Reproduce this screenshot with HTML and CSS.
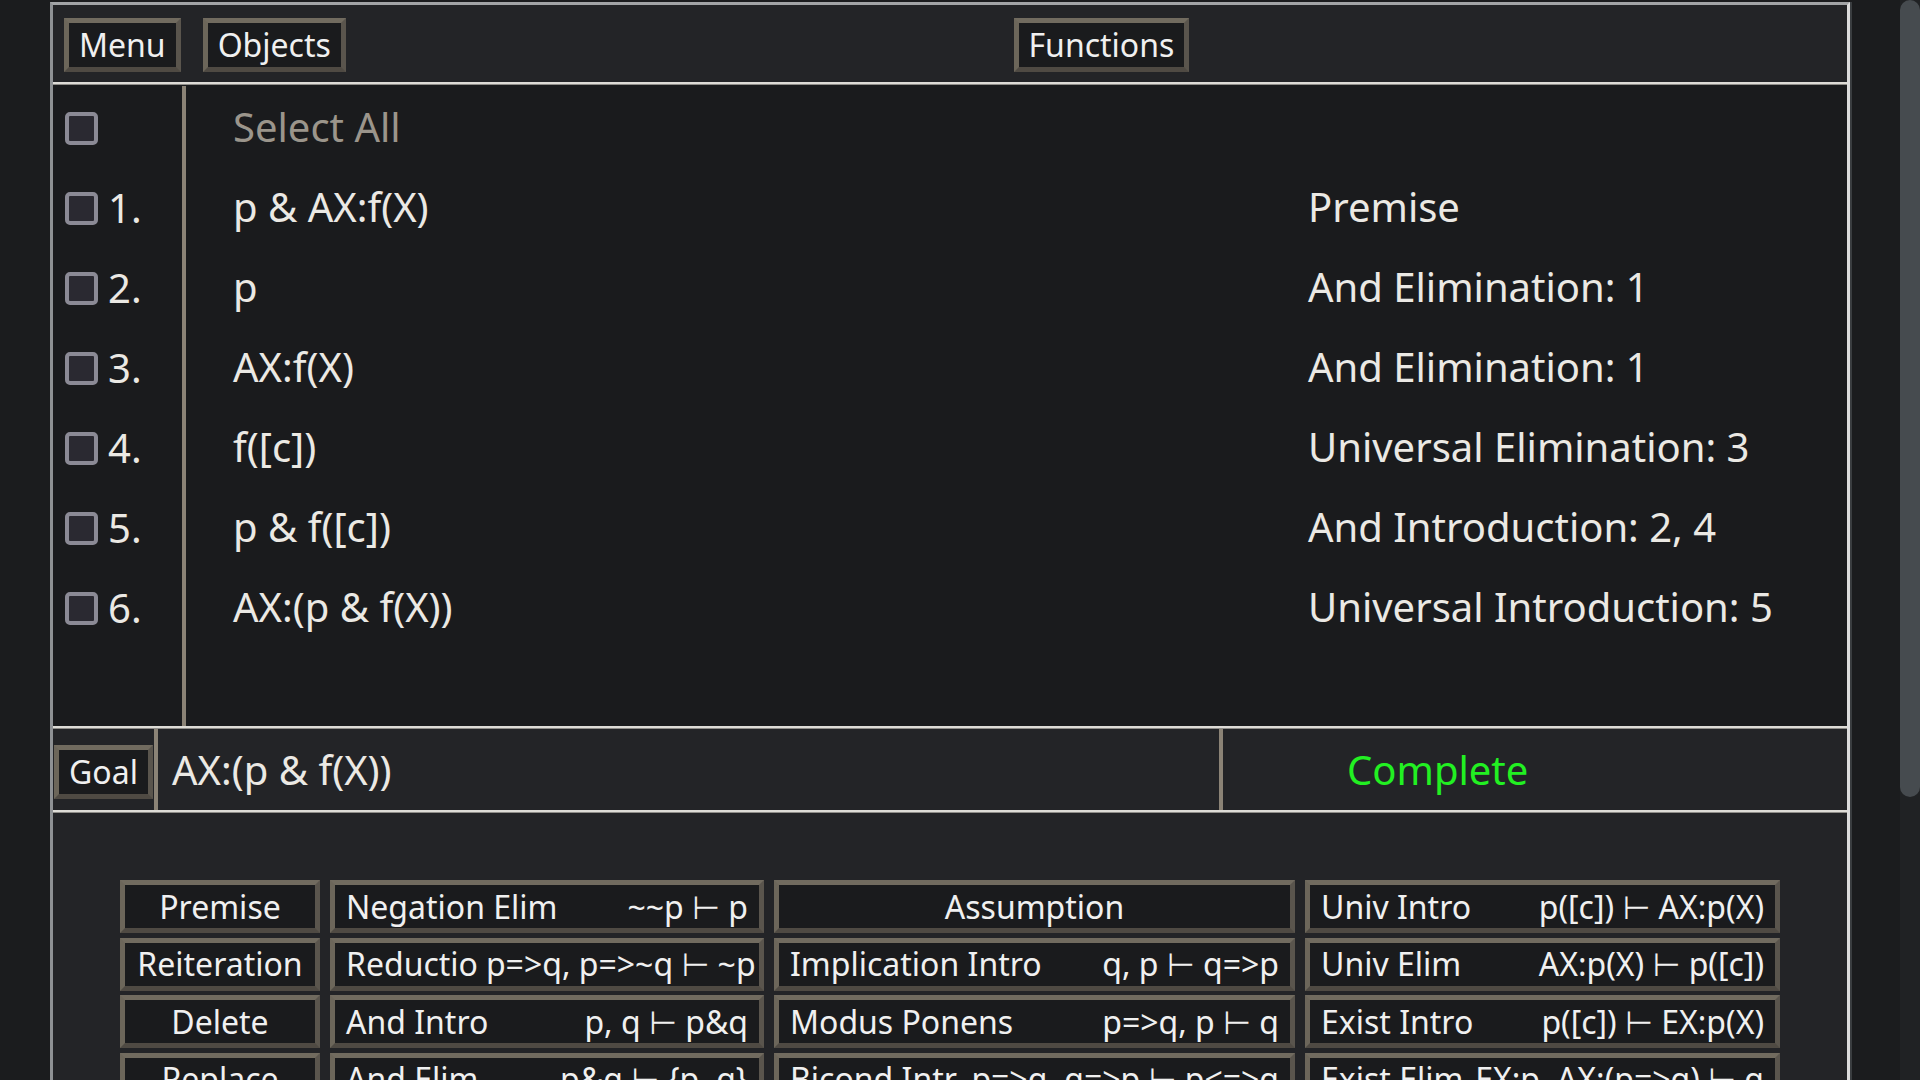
FILE: index.html
```html
<!DOCTYPE html>
<html lang="en">
<head>
<meta charset="utf-8">
<title>Proof Assistant</title>
<link rel="stylesheet" href="styles.css">
</head>
<body>
<div class="app">
  <header class="topbar">
    <div class="topbar-left">
      <div class="btn">Menu</div>
      <div class="btn">Objects</div>
    </div>
    <div class="topbar-center">
      <div class="btn">Functions</div>
    </div>
  </header>
  <div class="rule"></div>

  <section class="proof">
    <div class="gutter">
      <div class="g-row"><span class="check"></span></div>
      <div class="g-row"><span class="check"></span><span class="num">1.</span></div>
      <div class="g-row"><span class="check"></span><span class="num">2.</span></div>
      <div class="g-row"><span class="check"></span><span class="num">3.</span></div>
      <div class="g-row"><span class="check"></span><span class="num">4.</span></div>
      <div class="g-row"><span class="check"></span><span class="num">5.</span></div>
      <div class="g-row"><span class="check"></span><span class="num">6.</span></div>
    </div>
    <div class="lines">
      <div class="line"><span class="formula muted">Select All</span><span class="just"></span></div>
      <div class="line"><span class="formula">p &amp; AX:f(X)</span><span class="just">Premise</span></div>
      <div class="line"><span class="formula">p</span><span class="just">And Elimination: 1</span></div>
      <div class="line"><span class="formula">AX:f(X)</span><span class="just">And Elimination: 1</span></div>
      <div class="line"><span class="formula">f([c])</span><span class="just">Universal Elimination: 3</span></div>
      <div class="line"><span class="formula">p &amp; f([c])</span><span class="just">And Introduction: 2, 4</span></div>
      <div class="line"><span class="formula">AX:(p &amp; f(X))</span><span class="just">Universal Introduction: 5</span></div>
    </div>
  </section>
  <div class="rule"></div>

  <section class="goalbar">
    <div class="goal-cell"><div class="btn btn-goal">Goal</div></div>
    <div class="goal-text">AX:(p &amp; f(X))</div>
    <div class="goal-status">Complete</div>
  </section>
  <div class="rule"></div>

  <section class="rules">
    <div class="rule-grid">
      <div class="btn rbtn center">Premise</div>
      <div class="btn rbtn"><span>Negation Elim</span><span>~~p ⊢ p</span></div>
      <div class="btn rbtn center">Assumption</div>
      <div class="btn rbtn"><span>Univ Intro</span><span>p([c]) ⊢ AX:p(X)</span></div>

      <div class="btn rbtn center">Reiteration</div>
      <div class="btn rbtn"><span>Reductio</span><span>p=&gt;q, p=&gt;~q ⊢ ~p</span></div>
      <div class="btn rbtn"><span>Implication Intro</span><span>q, p ⊢ q=&gt;p</span></div>
      <div class="btn rbtn"><span>Univ Elim</span><span>AX:p(X) ⊢ p([c])</span></div>

      <div class="btn rbtn center">Delete</div>
      <div class="btn rbtn"><span>And Intro</span><span>p, q ⊢ p&amp;q</span></div>
      <div class="btn rbtn"><span>Modus Ponens</span><span>p=&gt;q, p ⊢ q</span></div>
      <div class="btn rbtn"><span>Exist Intro</span><span>p([c]) ⊢ EX:p(X)</span></div>

      <div class="btn rbtn center">Replace</div>
      <div class="btn rbtn"><span>And Elim</span><span>p&amp;q ⊢ {p, q}</span></div>
      <div class="btn rbtn"><span>Bicond Intr</span><span>p=&gt;q, q=&gt;p ⊢ p&lt;=&gt;q</span></div>
      <div class="btn rbtn"><span>Exist Elim</span><span>EX:p, AX:(p=&gt;q) ⊢ q</span></div>
    </div>
  </section>
</div>
<div class="scrollbar"><div class="thumb"></div></div>
</body>
</html>
```
FILE: styles.css
```css
* { box-sizing: border-box; }

html, body {
  margin: 0;
  padding: 0;
  height: 1080px;
  overflow: hidden;
  background: #1b1c1e;
  font-family: "Noto Sans", "DejaVu Sans", sans-serif;
  color: #ebe9e4;
}

.app {
  margin: 2px 0 0 50px;
  width: 1800px;
  border-top: 3px solid #a2a4a6;
  border-left: 3px solid #8e9194;
  border-right: 3px solid #dcdcdc;
  box-shadow: 2px 0 0 #3a3d40;
}

.rule {
  height: 3px;
  background: linear-gradient(#dedcd7 0 2px, #8f8d89 2px 3px);
}

/* generic bevelled button */
.btn {
  display: flex;
  align-items: center;
  justify-content: center;
  height: 54px;
  padding: 0 10px;
  border: 5px solid;
  border-color: #716b5f #5a554d #4f4a43 #6c665a;
  background: #1a1b1d;
  color: #f0f0f0;
  font-size: 32px;
  line-height: 1;
  white-space: nowrap;
}

/* top bar */
.topbar {
  height: 77px;
  background: #232427;
  display: flex;
  align-items: center;
  padding: 3px 0 0 11px;
}
.topbar-left {
  display: flex;
  gap: 22px;
}
.topbar-center {
  flex: 1;
  display: flex;
  justify-content: center;
  margin-left: 10px;
}

/* proof list */
.proof {
  display: flex;
  height: 641px;
  background: #1a1b1d;
  padding-top: 1px;
}
.gutter {
  width: 133px;
  border-right: 4px solid #8b8376;
}
.g-row {
  height: 80px;
  display: flex;
  align-items: center;
  padding: 4px 0 0 12px;
}
.check {
  width: 33px;
  height: 33px;
  border: 4px solid #8b8a95;
  border-radius: 5px;
  background: #2a2931;
  flex: none;
}
.num {
  margin-left: 10px;
  font-size: 40px;
  line-height: 1;
}
.lines {
  flex: 1;
}
.line {
  height: 80px;
  display: grid;
  grid-template-columns: 1075px 1fr;
  align-items: center;
  padding-left: 47px;
  font-size: 40px;
  white-space: nowrap;
}
.muted {
  color: #9b958b;
}

/* goal bar */
.goalbar {
  height: 81px;
  display: flex;
  background: #232427;
  font-size: 40px;
}
.goal-cell {
  width: 105px;
  padding: 5px 0 0 1px;
  border-right: 4px solid #8b8376;
  display: flex;
  align-items: center;
}
.btn-goal {
  width: 99px;
  padding: 0;
}
.goal-text {
  width: 1065px;
  padding-left: 14px;
  border-right: 4px solid #8b8376;
  display: flex;
  align-items: center;
}
.goal-status {
  flex: 1;
  padding-left: 124px;
  display: flex;
  align-items: center;
  color: #22f022;
}

/* rules panel */
.rules {
  height: 700px;
  background: #232427;
  padding-top: 67px;
}
.rule-grid {
  display: grid;
  grid-template-columns: 200px 434px 521px 475px;
  grid-auto-rows: 53px;
  column-gap: 10px;
  row-gap: 4.5px;
  justify-content: center;
}
.rbtn {
  height: 53px;
  justify-content: space-between;
  padding: 0 11px;
  gap: 8px;
}
.rbtn.center {
  justify-content: center;
}

/* page scrollbar overlay */
.scrollbar {
  position: fixed;
  top: 0;
  right: 0;
  width: 20px;
  height: 1080px;
  background: #202224;
}
.thumb {
  width: 20px;
  height: 797px;
  background: #464b4f;
  border-radius: 10px;
}
```
